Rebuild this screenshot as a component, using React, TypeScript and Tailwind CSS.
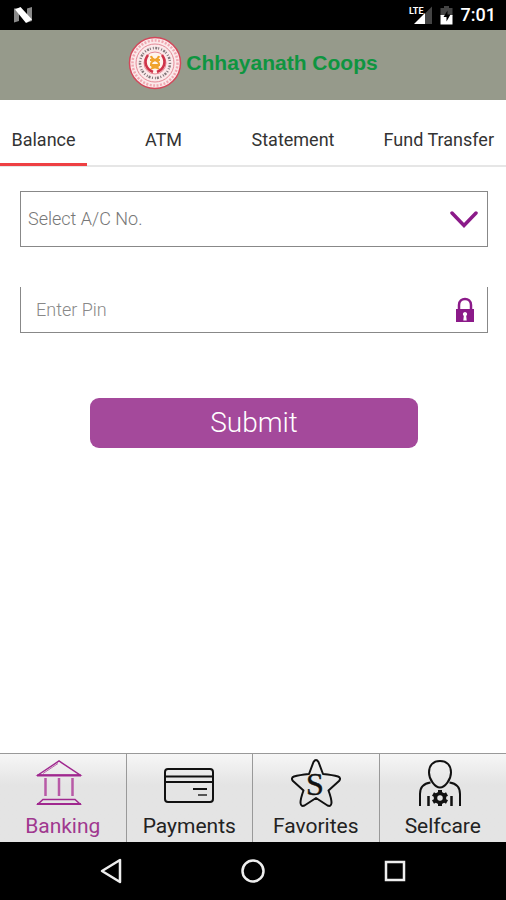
import clsx from "clsx";
import React from "react";

const tabs = ["Balance", "ATM", "Statement", "Fund Transfer"];

const StatusBar = () => (
  <div className="flex h-[30px] items-center justify-between bg-black pr-[10px] pl-3">
    <svg width="22" height="18" viewBox="0 0 22 18">
      <path d="M2 2.500 7 2v13L2 16.500z" fill="#8a8a8a" />
      <path d="M15 2.500 20 1v14l-5 1.500z" fill="#8a8a8a" />
      <path d="M3 3.500 8.500 1 20 13.500 14 17z" fill="#fff" />
    </svg>
    <div className="flex items-center gap-2">
      <svg width="24" height="20" viewBox="0 0 24 20">
        <path d="M17 8.500 24 1.500V19h-7z" fill="#444" />
        <path d="M6 19 17 8v11z" fill="#fff" />
        <text
          x="1"
          y="9"
          fill="#fff"
          className="font-['Roboto',sans-serif] text-[9px] font-bold"
        >
          LTE
        </text>
      </svg>
      <svg width="13" height="19" viewBox="0 0 13 19">
        <path d="M4 0h5v2h3.500v8H.5V2H4z" fill="#444" />
        <path d="M.5 9h12v9.500H.5z" fill="#fff" />
        <path d="M7.500 4.500 3.500 11h3v4.500l4-7h-3z" fill="#000" />
      </svg>
      <span className="text-lg leading-none font-medium text-white">7:01</span>
    </div>
  </div>
);

const Logo = () => (
  <svg width="54" height="54" viewBox="0 0 54 54" fill="none">
    <circle cx="27" cy="27" r="25.500" fill="#fbe9ea" stroke="#d2475a" strokeWidth="1.500" />
    <circle cx="27" cy="27" r="22.500" stroke="#f0a9b2" strokeWidth="2.500" strokeDasharray="2 1.500" />
    <circle cx="27" cy="27" r="19" stroke="#e58a97" />
    <circle cx="27" cy="27" r="15" stroke="#83787b" strokeWidth="2.500" strokeDasharray="1 1.500 2 1 1 2" />
    <circle cx="27" cy="27" r="11" fill="#fff5ee" stroke="#e58a97" />
    <path d="M20 19c-5 7-2 14 5 17M34 19c5 7 2 14-5 17" stroke="#cf3349" strokeWidth="2.500" />
    <path
      d="M23 20c1 5 8 4 8 8s-6 3-8 5M31 20c-1 5-8 4-8 8s6 3 8 5M22 24h10M22 29h10"
      stroke="#f0a32c"
      strokeWidth="2"
    />
  </svg>
);

const BankIcon = () => (
  <svg width="58" height="50" viewBox="0 0 58 50" fill="none" stroke="#a0288f">
    <path d="M4 17 25 3l21 14z" strokeWidth="1.500" />
    <path d="m9 15.500 15-10" stroke="#bd6aac" />
    <path d="M3 17.500h44" strokeWidth="2" />
    <path d="M11.500 20v18M25 20v18M38.500 20v18" stroke="#b85aa6" strokeWidth="2.500" />
    <path d="M9 41.500h32l5 4.500H4z" strokeWidth="1.500" />
    <path d="M3 46h44" strokeWidth="2" />
  </svg>
);

const CardIcon = () => (
  <svg width="50" height="50" viewBox="0 0 50 50" fill="none" stroke="#111" strokeWidth="2">
    <rect x="1" y="11" width="48" height="33" rx="3" />
    <path d="M1 18.500h48M1 24h48M29 31h14" />
    <path d="M34 37h9" stroke="#555" />
  </svg>
);

const StarIcon = () => (
  <svg width="50" height="50" viewBox="0 0 50 50" fill="none">
    <path
      d="M22.500 4q2.500-4 5 0l4.500 12q10 1 15 2.500 3.500 1.500 1 4.500L37.500 32.500q3 8 3 12.500-.5 4-4 2.500L25 40 13.500 47.500q-3.500 1.500-4-2.500 0-4.500 3-12.500L2 23q-2.500-3 1-4.500 5-1.500 15-2.500z"
      stroke="#111"
      strokeWidth="2"
      strokeLinejoin="round"
    />
    <text
      x="24"
      y="37"
      textAnchor="middle"
      fill="#111"
      stroke="#111"
      strokeWidth="0.500"
      className="font-['Liberation_Serif',serif] text-[32px]"
    >
      S
    </text>
  </svg>
);

const PersonIcon = () => (
  <svg width="50" height="50" viewBox="0 0 50 50" fill="none" stroke="#111" strokeWidth="2">
    <path d="M22 3c7 0 11 4.500 11 11.500S27 29.500 22 29.500s-11-8-11-15S15 3 22 3z" />
    <path d="M12.500 24.500C5 25.500 2 29 2 36v12M31.500 24.500C39 25.500 42 29 42 36v12" />
    <path d="M10.500 38v10M33.500 38v10" strokeWidth="2.500" />
    <circle cx="22" cy="40" r="4.500" strokeWidth="3.500" />
    <path
      d="M22 36v-4M22 44v4M25.500 38l3.500-2M18.500 42 15 44M18.500 38 15 36M25.500 42l3.500 2"
      strokeWidth="4"
    />
    <circle cx="22" cy="40" r="2.200" fill="#e4e4e4" stroke="none" />
  </svg>
);

const links = [
  { name: "Banking", icon: <BankIcon /> },
  { name: "Payments", icon: <CardIcon /> },
  { name: "Favorites", icon: <StarIcon /> },
  { name: "Selfcare", icon: <PersonIcon /> },
];

const App = () => {
  return (
    <div className="flex min-h-screen flex-col bg-white font-['Roboto',sans-serif]">
      <StatusBar />

      <header className="flex h-[70px] items-center justify-center gap-1 bg-[#969a8b] pb-1">
        <Logo />
        <h1 className="font-['Liberation_Sans',sans-serif] text-[21px] font-bold text-[#0e9540]">
          Chhayanath Coops
        </h1>
      </header>

      <nav className="grid h-[67px] grid-cols-[87fr_153fr_106fr_160fr] border-b-2 border-[#e6e6e6]">
        {tabs.map((tab, i) => (
          <button
            key={tab}
            type="button"
            className={clsx(
              "-mb-px border-b-3 pt-4 text-lg whitespace-nowrap text-[#333]",
              i === 0 ? "border-[#ee4043]" : "border-transparent",
              i === 3 && "pr-3 text-right"
            )}
          >
            {tab}
          </button>
        ))}
      </nav>

      <main className="flex flex-1 flex-col px-5 pt-6 pr-[18px]">
        <div className="grid items-center">
          <select
            aria-label="Select A/C No."
            className="col-start-1 row-start-1 h-14 appearance-none border border-[#888] bg-white px-[7px] text-lg font-light text-[#777]"
          >
            <option>Select A/C No.</option>
          </select>
          <svg
            className="pointer-events-none col-start-1 row-start-1 mr-[10px] justify-self-end"
            width="28"
            height="18"
            viewBox="0 0 28 18"
            fill="none"
          >
            <path d="m2 3 12 12.500L26 3" stroke="#8b1a89" strokeWidth="3.500" strokeLinecap="round" />
          </svg>
        </div>

        <div className="mt-10 flex h-[46px] items-center border border-t-0 border-[#888] pr-3 pl-[15px]">
          <input
            type="password"
            aria-label="Enter Pin"
            placeholder="Enter Pin"
            className="min-w-0 flex-1 text-lg font-light outline-none placeholder:text-[#888]"
          />
          <svg width="20" height="26" viewBox="0 0 20 26" fill="none">
            <path d="M4 13V8c0-8 12-8 12 0v5" stroke="#8b1a89" strokeWidth="2.500" />
            <path d="M1 12h18v13H1z" fill="#8b1a89" />
            <path d="M10 15a2.200 2.200 0 0 1 1.200 4l.5 4.500H8.300l.5-4.500A2.200 2.200 0 0 1 10 15z" fill="#fff" />
          </svg>
        </div>

        <button
          type="button"
          className="mt-[65px] h-[50px] w-7/10 self-center rounded-[9px] bg-[#a4499b] pb-px text-[28px] leading-none font-light text-white"
        >
          Submit
        </button>
      </main>

      <nav className="grid grid-cols-4 divide-x divide-[#999] border-t border-[#999] bg-linear-to-b from-[#f6f6f6] via-[#e4e4e4] via-35% to-[#e4e4e4]">
        {links.map((link, i) => (
          <a
            key={link.name}
            href="#"
            className={clsx(
              "flex h-[88px] flex-col items-center gap-1 pt-1 text-[21px] leading-7",
              i === 0 ? "text-[#a0388f]" : "text-[#222]"
            )}
          >
            {link.icon}
            {link.name}
          </a>
        ))}
      </nav>

      <div className="flex h-[58px] items-center justify-center gap-[118px] bg-black">
        <button type="button" aria-label="Back">
          <svg width="24" height="26" viewBox="0 0 24 26" fill="none">
            <path d="M21 2v22L3 13z" stroke="#eee" strokeWidth="2.500" strokeLinejoin="round" />
          </svg>
        </button>
        <button type="button" aria-label="Home">
          <svg width="24" height="24" viewBox="0 0 24 24" fill="none">
            <circle cx="12" cy="12" r="10.500" stroke="#eee" strokeWidth="2.500" />
          </svg>
        </button>
        <button type="button" aria-label="Recent apps">
          <svg width="24" height="24" viewBox="0 0 24 24" fill="none">
            <rect x="3" y="3" width="18" height="18" stroke="#eee" strokeWidth="2.500" />
          </svg>
        </button>
      </div>
    </div>
  );
};

export default App;
